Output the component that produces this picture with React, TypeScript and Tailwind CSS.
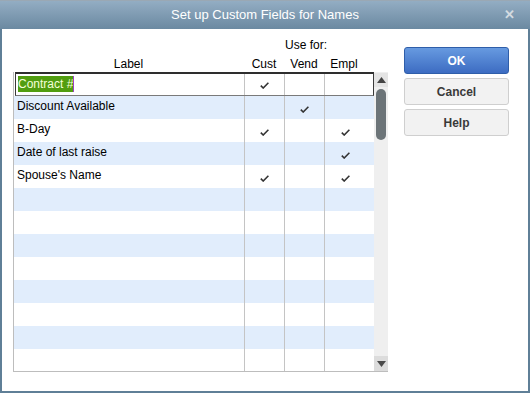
import React from "react";

const rows: { label: string; c: boolean; v: boolean; e: boolean }[] = [
  { label: "Contract #", c: true, v: false, e: false },
  { label: "Discount Available", c: false, v: true, e: false },
  { label: "B-Day", c: true, v: false, e: true },
  { label: "Date of last raise", c: false, v: false, e: true },
  { label: "Spouse's Name", c: true, v: false, e: true },
];

const Check = () => (
  <svg width="9" height="7" viewBox="0 0 9 7" className="mt-[3px]">
    <path d="M0.8 3.6 L3.2 6 L8.4 0.8" fill="none" stroke="#333" strokeWidth="1.6" />
  </svg>
);

export default function App() {
  const all = Array.from({ length: 13 }, (_, i) => rows[i] ?? null);
  return (
    <div
      className="w-[530px] h-[393px] flex flex-col bg-white overflow-hidden"
      style={{ fontFamily: '"Liberation Sans", Arial, sans-serif' }}
    >
      {/* Title bar */}
      <div className="h-[29px] shrink-0 relative flex items-center justify-center border-t border-[#9aa8b4] bg-gradient-to-b from-[#93adc3] to-[#6b89a1]">
        <span className="text-white text-[13px] leading-[16px]">Set up Custom Fields for Names</span>
        <span className="absolute right-[15px] top-[7px] text-[#d3dbe1] text-[13px] font-bold leading-[14px]">✕</span>
      </div>
      {/* Body */}
      <div className="flex-1 flex border-l-2 border-r-2 border-b-2 border-[#5f7f97]">
        <div className="pl-[11px] flex flex-col">
          <div className="h-[14px] mt-[9px] flex text-[12px] leading-[14px] text-black">
            <div className="w-[231px]" />
            <div className="w-[129px] text-center pr-[5px]">Use for:</div>
          </div>
          <div className="h-[14px] mt-[5px] mb-[1px] flex text-[12px] leading-[14px] text-black">
            <div className="w-[231px] text-center">Label</div>
            <div className="w-[40px] text-center">Cust</div>
            <div className="w-[40px] text-center">Vend</div>
            <div className="w-[40px] text-center">Empl</div>
          </div>
          {/* Grid */}
          <div className="w-[375px] flex border-l border-b border-[#bdbdbd]">
            <div className="w-[360px] flex flex-col relative">
              {all.map((r, i) => (
                <div
                  key={i}
                  className={`flex ${i === 0 ? "h-[24px]" : i === 12 ? "h-[22px]" : "h-[23px]"} ${
                    i % 2 === 1 ? "bg-[#e1edfc]" : "bg-white"
                  } text-[12px] text-black`}
                >
                  <div
                    className={`w-[231px] border-r border-[#c4c4c4] flex items-center pl-[3px] ${
                      i === 0 ? "" : "pb-[3px]"
                    }`}
                  >
                    {r && i === 0 ? (
                      <span className="flex items-center pl-[1px]">
                        <span className="bg-[#519d10] text-[#f4ffd8] leading-[16px] h-[16px]">Contract #</span>
                        <span className="w-[1px] h-[16px] bg-[#9b3fc8]" />
                      </span>
                    ) : r ? (
                      <span className="leading-[14px]">{r.label}</span>
                    ) : null}
                  </div>
                  <div className="w-[40px] border-r border-[#c4c4c4] flex items-center justify-center">
                    {r?.c && <Check />}
                  </div>
                  <div className="w-[40px] border-r border-[#c4c4c4] flex items-center justify-center">
                    {r?.v && <Check />}
                  </div>
                  <div className="w-[49px] flex items-center">
                    <div className="w-[40px] flex justify-center">{r?.e && <Check />}</div>
                  </div>
                </div>
              ))}
              <div className="absolute left-[1px] top-0 w-[359px] h-[24px] border-t-2 border-l border-r border-b border-t-[#2e2e2e] border-l-[#3a3a3a] border-r-[#3a3a3a] border-b-[#7a7a7a] pointer-events-none" />
            </div>
            {/* Scrollbar */}
            <div className="w-[14px] bg-[#efefef] flex flex-col">
              <div className="h-[14px] mt-[1px] bg-[#e4e4e4] flex items-center justify-center">
                <svg width="9" height="6" viewBox="0 0 9 6">
                  <path d="M4.5 0 L9 6 L0 6 Z" fill="#444" />
                </svg>
              </div>
              <div className="mt-[2px] mx-auto w-[10px] h-[51px] rounded-full bg-[#6c7478]" />
              <div className="flex-1" />
              <div className="h-[15px] bg-[#dcdcdc] flex items-center justify-center">
                <svg width="9" height="6" viewBox="0 0 9 6">
                  <path d="M0 0 L9 0 L4.5 6 Z" fill="#4a4a4a" />
                </svg>
              </div>
            </div>
          </div>
        </div>
        {/* Buttons */}
        <div className="ml-[16px] pt-[18px] flex flex-col gap-[4px]">
          <button className="w-[105px] h-[27px] rounded-[3px] border border-[#2f5ea9] bg-gradient-to-b from-[#679ae0] to-[#3d6cc2] text-white text-[12px] font-bold">
            OK
          </button>
          <button className="w-[105px] h-[27px] rounded-[3px] border border-[#cfcfcf] bg-[#f2f2f2] text-[#3a3a3a] text-[12px] font-bold">
            Cancel
          </button>
          <button className="w-[105px] h-[27px] rounded-[3px] border border-[#cfcfcf] bg-[#f2f2f2] text-[#3a3a3a] text-[12px] font-bold">
            Help
          </button>
        </div>
      </div>
    </div>
  );
}
